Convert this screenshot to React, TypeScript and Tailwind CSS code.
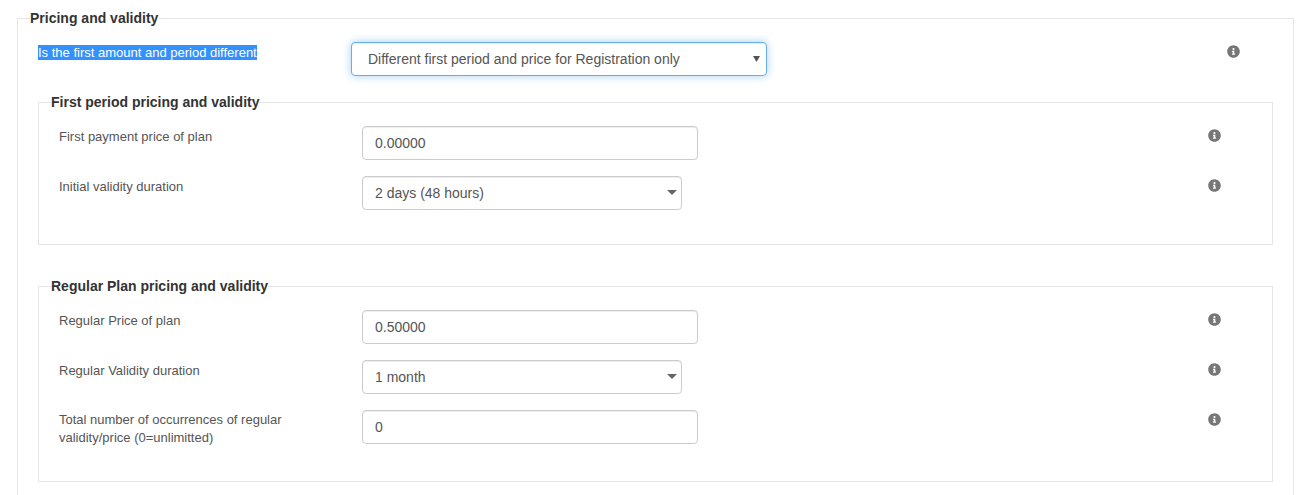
import React from "react";
import { FaInfoCircle } from "react-icons/fa";

function Info() {
  return <FaInfoCircle className="shrink-0 mt-[3px] text-[#777777]" size={13} />;
}

function Caret() {
  return (
    <svg className="absolute right-[5px] top-[14px]" width="10" height="5" viewBox="0 0 10 5">
      <path d="M0 0h10L5 5z" fill="#666666" />
    </svg>
  );
}

const inputCls =
  "h-[34px] rounded-[4px] border border-[#cccccc] bg-white px-3 text-[14px] text-[#555555] shadow-[inset_0_1px_1px_rgba(0,0,0,0.075)] outline-none";

const legendCls = "-ml-[8px] text-[14px] font-bold leading-[20px] text-[#333333]";

function Row({ label, twoLines, children }: { label: React.ReactNode; twoLines?: boolean; children: React.ReactNode }) {
  return (
    <div className="flex items-start">
      <div className="w-[303px] shrink-0">
        <div className={`w-[240px] text-[13px] leading-[18px] text-[#555555] ${twoLines ? "pt-px" : "pt-[2px]"}`}>{label}</div>
      </div>
      <div className="w-[846px] shrink-0">{children}</div>
      <Info />
    </div>
  );
}

function TextField({ value }: { value: string }) {
  return <input className={`${inputCls} w-[336px] block`} defaultValue={value} />;
}

function SelectField({ value }: { value: string }) {
  return (
    <div className="relative w-[320px]">
      <select className={`${inputCls} w-full block appearance-none`} defaultValue={value}>
        <option>{value}</option>
      </select>
      <Caret />
    </div>
  );
}

export default function App() {
  return (
    <div
      className="h-[495px] overflow-hidden bg-white pl-[17px] pr-[21px] pt-[8px]"
      style={{ fontFamily: '"Liberation Sans", Arial, sans-serif' }}
    >
      <fieldset className="border border-[#e5e5e5] px-[20px] pb-[40px]">
        <legend className={legendCls}>Pricing and validity</legend>
        <div className="flex items-start pt-[14px]">
          <div className="w-[313px] shrink-0 pt-[3px]">
            <div className="w-fit bg-[#3390ff] text-[13px] leading-[15px] text-white">
              Is the first amount and period different
            </div>
          </div>
          <div className="w-[876px] shrink-0">
            <div className="relative w-[416px]">
              <select
                className="block h-[34px] w-full appearance-none rounded-[4px] border border-[#66afe9] bg-white px-4 text-[14px] text-[#555555] shadow-[inset_0_1px_1px_rgba(0,0,0,0.075),0_0_8px_rgba(102,175,233,0.6)] outline-none"
                defaultValue="a"
              >
                <option value="a">Different first period and price for Registration only</option>
              </select>
              <svg className="absolute right-[7px] top-[14px]" width="7" height="6" viewBox="0 0 7 6">
                <path d="M0 0h7L3.5 6z" fill="#555555" />
              </svg>
            </div>
          </div>
          <Info />
        </div>

        <fieldset className="mt-[16px] border border-[#e5e5e5] px-[20px] pb-[34px]">
          <legend className={legendCls}>First period pricing and validity</legend>
          <div className="flex flex-col gap-[16px] pt-[14px]">
            <Row label="First payment price of plan">
              <TextField value="0.00000" />
            </Row>
            <Row label="Initial validity duration">
              <SelectField value="2 days (48 hours)" />
            </Row>
          </div>
        </fieldset>

        <fieldset className="mt-[31px] border border-[#e5e5e5] px-[20px] pb-[34px]">
          <legend className={legendCls}>Regular Plan pricing and validity</legend>
          <div className="flex flex-col gap-[16px] pt-[14px]">
            <Row label="Regular Price of plan">
              <TextField value="0.50000" />
            </Row>
            <Row label="Regular Validity duration">
              <SelectField value="1 month" />
            </Row>
            <Row twoLines label="Total number of occurrences of regular validity/price (0=unlimitted)">
              <TextField value="0" />
            </Row>
          </div>
        </fieldset>
      </fieldset>
    </div>
  );
}
